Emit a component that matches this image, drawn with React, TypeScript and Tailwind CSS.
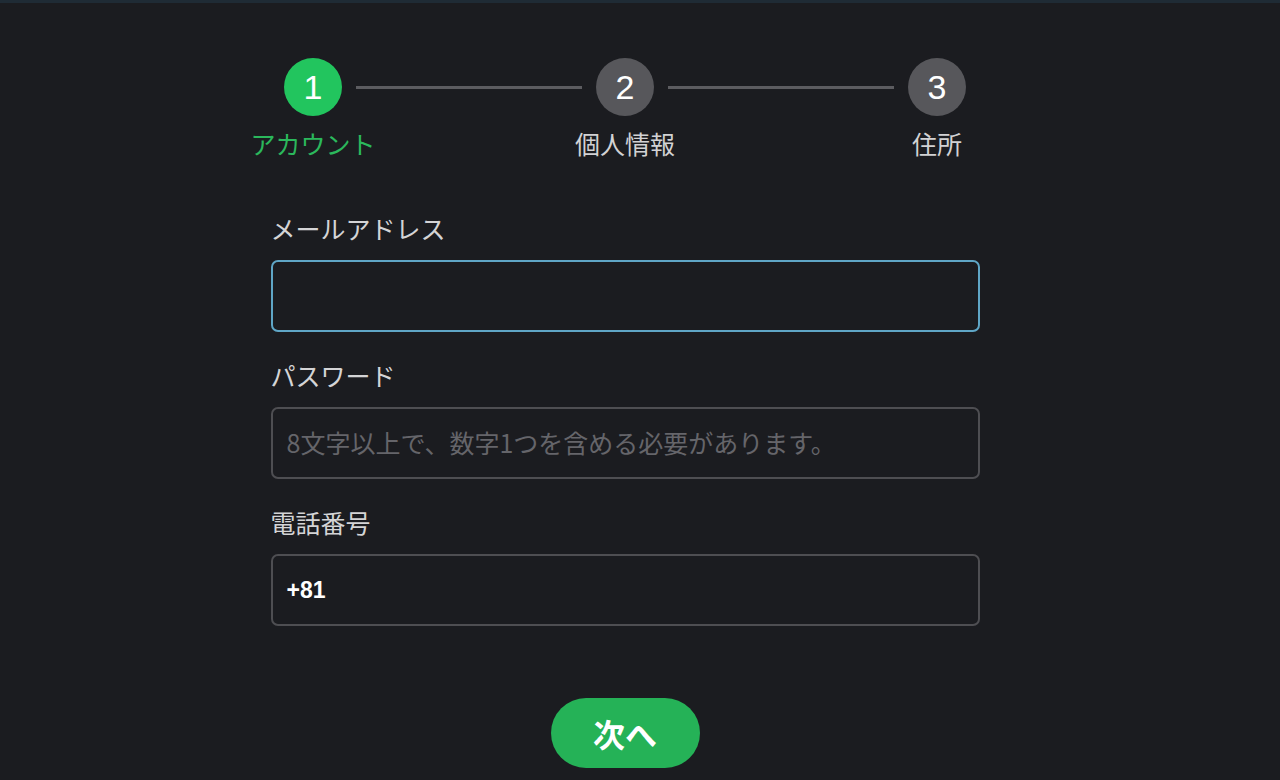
import React from 'react'

const steps = [
  { n: 1, label: 'アカウント', active: true },
  { n: 2, label: '個人情報', active: false },
  { n: 3, label: '住所', active: false },
]

function Stepper() {
  return (
    <div className="flex items-start w-[682px]">
      {steps.map((s, i) => (
        <React.Fragment key={s.n}>
          <div className="flex flex-col items-center w-[58px] shrink-0">
            <div
              className={
                'w-[58px] h-[58px] rounded-full flex items-center justify-center text-[34px] text-white font-["Liberation_Sans",sans-serif] ' +
                (s.active ? 'bg-[#22c55e]' : 'bg-[#57575b]')
              }
            >
              {s.n}
            </div>
            <div
              className={
                'mt-[11px] whitespace-nowrap text-[25px] leading-[32px] ' +
                (s.active ? 'text-[#2bb85c]' : 'text-[#d2d2d4]')
              }
            >
              {s.label}
            </div>
          </div>
          {i < steps.length - 1 && (
            <div className="flex-1 mx-[14px] mt-[28px] h-[3px] bg-[#5c5c60]" />
          )}
        </React.Fragment>
      ))}
    </div>
  )
}

function Field({ label, children, focused }: { label: string; children?: React.ReactNode; focused?: boolean }) {
  return (
    <div className="flex flex-col">
      <div className="text-[25px] leading-[32px] text-[#d4d4d6]">{label}</div>
      <div
        className={
          'mt-[16px] h-[72px] rounded-[7px] flex items-center px-[14px] ' +
          (focused ? 'border-2 border-[#5fa6c6]' : 'border-2 border-[#4e4e52]')
        }
      >
        {children}
      </div>
    </div>
  )
}

export default function App() {
  return (
    <div className="min-h-[780px] bg-[#1b1c20] font-['Noto_Sans_CJK_JP',sans-serif]">
      <div className="h-[3px] bg-[#1f2b35]" />
      <div className="flex flex-col items-center pr-[30px] pt-[55px]">
        <Stepper />
        <div className="mt-[53px] w-[709px] flex flex-col gap-[27px]">
          <Field label="メールアドレス" focused />
          <Field label="パスワード">
            <span className="text-[25px] text-[#65656a]">8文字以上で、数字1つを含める必要があります。</span>
          </Field>
          <Field label="電話番号">
            <span className="text-[23px] font-bold text-white font-['Liberation_Sans',sans-serif]">+81</span>
          </Field>
        </div>
        <button className="mt-[72px] w-[149px] h-[70px] rounded-full bg-[#25b257] text-white text-[32px] font-bold leading-none">
          次へ
        </button>
      </div>
    </div>
  )
}
